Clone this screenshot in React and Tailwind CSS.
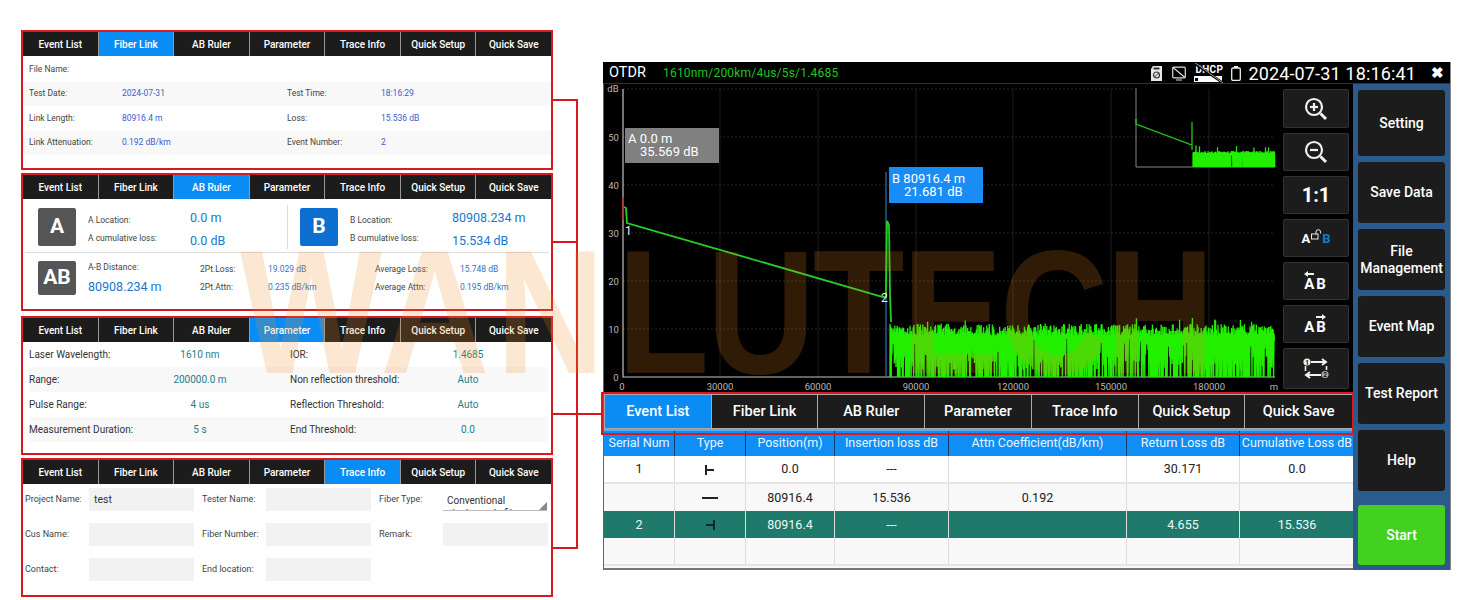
import React from 'react';

const tabNames = ['Event List', 'Fiber Link', 'AB Ruler', 'Parameter', 'Trace Info', 'Quick Setup', 'Quick Save'];

// seeded so the noise floor is the same on every render
let seed = 7;
const rnd = () => {
  seed = (seed * 16807) % 2147483647;
  return seed / 2147483647;
};

const makeNoise = (x0, x1, top, bottom, spread, step, deep, reach) => {
  let d = `M${x0} ${bottom}`;
  for (let x = x0; x < x1; x += step) {
    const hi = top + rnd() * spread + (rnd() > 0.94 ? -6 : 0);
    const lo = rnd() < deep ? bottom : top + spread + rnd() * reach;
    d += `L${x.toFixed(1)} ${hi.toFixed(1)}L${(x + step / 2).toFixed(1)} ${lo.toFixed(1)}`;
  }
  return d;
};

const noiseMain = makeNoise(890, 1274, 324, 377, 12, 0.8, 0.6, 34);
const noiseInset = makeNoise(1193, 1275, 151, 167, 2.5, 0.5, 0.9, 8);

const Tabs = ({ active }) => (
  <div className="flex h-[24px] bg-[#1c1c1c] shrink-0">
    {tabNames.map((name, i) => (
      <div
        key={name}
        className={`flex-1 flex items-center justify-center text-[10px] font-medium text-white border-r border-[#999] last:border-r-0 ${active === i ? 'bg-[#0a8cf5]' : ''}`}
      >
        {name}
      </div>
    ))}
  </div>
);

const Panel = ({ className, active, children }) => (
  <div className={`flex flex-col border-2 border-[#d81920] overflow-hidden ${className}`}>
    <Tabs active={active} />
    {children}
  </div>
);

const LinkRow = ({ alt, children }) => (
  <div className={`flex items-center h-[24.5px] pl-[6px] text-[8.5px] text-[#444] ${alt ? 'bg-[#f8f8f8]' : ''}`}>
    {children}
  </div>
);

const FiberLinkPanel = () => (
  <Panel className="h-[140px]" active={1}>
    <div className="pt-[1px]">
      <LinkRow>File Name:</LinkRow>
      {[
        ['Test Date:', '2024-07-31', 'Test Time:', '18:16:29'],
        ['Link Length:', '80916.4 m', 'Loss:', '15.536 dB'],
        ['Link Attenuation:', '0.192 dB/km', 'Event Number:', '2'],
      ].map((r, i) => (
        <LinkRow key={r[0]} alt={i !== 1}>
          <span className="w-[93px]">{r[0]}</span>
          <span className="w-[165px] text-[#3a5ccc]">{r[1]}</span>
          <span className="w-[94px]">{r[2]}</span>
          <span className="text-[#3a5ccc]">{r[3]}</span>
        </LinkRow>
      ))}
    </div>
  </Panel>
);

const Badge = ({ children, blue, small }) => (
  <div
    className={`w-[38px] flex items-center justify-center rounded-[2px] font-bold text-white shrink-0 ${small ? 'h-[34px]' : 'h-[38px]'} ${blue ? 'bg-[#0d6fd0]' : 'bg-[#555]'} text-[21px]`}
  >
    {children}
  </div>
);

const RulerSide = ({ badge, blue, loc, loss, className }) => (
  <div className={`flex items-center ${className}`}>
    <Badge blue={blue}>{badge}</Badge>
    <div className="ml-[12px] w-[102px] pt-[6px] text-[8.5px] text-[#444] flex flex-col gap-[9px]">
      <span className="leading-[9px]">{badge} Location:</span>
      <span className="leading-[9px]">{badge} cumulative loss:</span>
    </div>
    <div className="w-[96px] pt-[4px] text-[12.5px] text-[#1678d0] flex flex-col gap-[8px]">
      <span className="leading-[15px]">{loc}</span>
      <span className="leading-[15px]">{loss}</span>
    </div>
  </div>
);

const AbRulerPanel = () => (
  <Panel className="h-[138px] mt-[3px]" active={2}>
    <div className="flex h-[54px] items-center border-b border-[#ddd] mx-[2px] pt-[2px]">
      <RulerSide badge="A" loc="0.0 m" loss="0.0 dB" className="pl-[13px] w-[263px] border-r border-[#ddd] h-[44px]" />
      <RulerSide badge="B" blue loc="80908.234 m" loss="15.534 dB" className="pl-[12px]" />
    </div>
    <div className="flex items-center pl-[15px] pt-[8px]">
      <Badge small>AB</Badge>
      <div className="ml-[12px] w-[112px] flex flex-col">
        <span className="text-[8.5px] leading-[10px] text-[#444]">A-B Distance:</span>
        <span className="text-[12.5px] leading-[16px] mt-[7px] text-[#1678d0]">80908.234 m</span>
      </div>
      <div className="grid grid-cols-[68px_107px_85px_80px] gap-y-[9px] text-[8.5px] leading-[9px] text-[#444]">
        <span>2Pt.Loss:</span>
        <span className="text-[#3a6ccc]">19.029 dB</span>
        <span>Average Loss:</span>
        <span className="text-[#3a6ccc]">15.748 dB</span>
        <span>2Pt.Attn:</span>
        <span className="text-[#3a6ccc]">0.235 dB/km</span>
        <span>Average Attn:</span>
        <span className="text-[#3a6ccc]">0.195 dB/km</span>
      </div>
    </div>
  </Panel>
);

const ParameterPanel = () => (
  <Panel className="h-[139px] mt-[5px]" active={3}>
    <div className="pl-[6px] pr-[3px]">
      {[
        ['Laser Wavelength:', '1610 nm', 'IOR:', '1.4685'],
        ['Range:', '200000.0 m', 'Non reflection threshold:', 'Auto'],
        ['Pulse Range:', '4 us', 'Reflection Threshold:', 'Auto'],
        ['Measurement Duration:', '5 s', 'End Threshold:', '0.0'],
      ].map((r, i) => (
        <div key={r[0]} className={`flex items-center h-[25px] text-[10px] text-[#333] ${i % 2 ? 'bg-[#f8f8f8]' : ''}`}>
          <span className="w-[122px]">{r[0]}</span>
          <span className="w-[98px] text-center text-[#1f7f8a]">{r[1]}</span>
          <span className="w-[41px]" />
          <span className="w-[128px]">{r[2]}</span>
          <span className="w-[100px] text-center text-[#1f7f8a]">{r[3]}</span>
        </div>
      ))}
    </div>
  </Panel>
);

const Field = ({ label, value }) => (
  <div className="flex items-center">
    <span className="text-[9px] text-[#444] w-[64px]">{label}</span>
    <div className="w-[105px] h-[23px] bg-[#f2f2f2] flex items-center px-[5px] text-[10.5px] text-[#333]">{value}</div>
  </div>
);

const TraceInfoPanel = () => (
  <Panel className="h-[139px] mt-[3px]" active={4}>
    <div className="flex flex-col gap-[12px] pl-[2px] pt-[4px]">
      <div className="flex gap-[8px]">
        <Field label="Project Name:" value="test" />
        <Field label="Tester Name:" />
        <div className="flex items-center">
          <span className="text-[9px] text-[#444] w-[64px]">Fiber Type:</span>
          <div className="relative w-[104px] h-[23px] border-b border-[#bbb] overflow-hidden px-[4px] pt-[6px] text-[10px] leading-[13px] text-[#333]">
            Conventional<br />single-mode fiber
            <div className="absolute right-0 bottom-0 w-0 h-0 border-l-[8px] border-l-transparent border-b-[8px] border-b-[#888]" />
          </div>
        </div>
      </div>
      <div className="flex gap-[8px]">
        <Field label="Cus Name:" />
        <Field label="Fiber Number:" />
        <Field label="Remark:" />
      </div>
      <div className="flex gap-[8px]">
        <Field label="Contact:" />
        <Field label="End location:" />
      </div>
    </div>
  </Panel>
);

const StatusIcons = () => (
  <div className="flex items-center">
    <svg width="11" height="15" viewBox="0 0 11 15" className="mr-[10px]">
      <path d="M2 0h9v15H0V3z" fill="#e8e8e8" />
      <rect x="2.5" y="1.5" width="6" height="2" fill="#333" />
      <circle cx="5.5" cy="9" r="3" fill="none" stroke="#333" strokeWidth="1.2" />
      <path d="M3.5 11l4-4" stroke="#333" strokeWidth="1" />
    </svg>
    <svg width="14" height="15" viewBox="0 0 14 15" className="mr-[8px]">
      <rect x="0.7" y="1.2" width="12.6" height="10.6" rx="1" fill="none" stroke="#ddd" strokeWidth="1.2" />
      <path d="M1 1.5l12 10M4 14h6" stroke="#ddd" strokeWidth="1.2" />
    </svg>
    <div className="relative w-[30px] h-[20px] mr-[7px]">
      <div className="text-[10px] leading-[11px] font-bold text-white tracking-[0.3px] pl-[1px] pt-[1px]">DHCP</div>
      <div className="h-[6px] mt-[1px] bg-white w-[28px] flex items-center pl-[1px]">
        <div className="w-[3px] h-[3px] bg-black" />
      </div>
      <svg width="30" height="20" viewBox="0 0 30 20" className="absolute left-0 top-0">
        <path d="M0 0l29 20" stroke="#000" strokeWidth="2.4" />
        <path d="M0 -1l29 21" stroke="#ccc" strokeWidth="0.8" />
      </svg>
    </div>
    <svg width="10" height="15" viewBox="0 0 10 15">
      <rect x="0.7" y="2" width="8.6" height="12.3" rx="1.2" fill="none" stroke="#eee" strokeWidth="1.3" />
      <rect x="3" y="0" width="4" height="2" fill="#eee" />
    </svg>
  </div>
);

const Chart = () => (
  <div className="relative w-[679px] h-[308px] shrink-0">
    <svg width="679" height="308" viewBox="604 84 679 308" className="block">
      {[137, 185, 233, 281, 329].map((y) => (
        <path key={y} d={`M623 ${y}H1275`} stroke="#333" strokeWidth="0.7" strokeDasharray="2 2" />
      ))}
      <path d="M623 89H1135" stroke="#333" strokeWidth="0.7" strokeDasharray="2 2" />
      {[720, 818, 916, 1013, 1111, 1209].map((x) => (
        <path key={x} d={`M${x} 89V377`} stroke="#232323" strokeWidth="0.8" />
      ))}
      <path d="M623 89V377H1275" fill="none" stroke="#c4c4c4" strokeWidth="1.2" />

      <path d="M1136 88V167H1275" fill="none" stroke="#888" strokeWidth="1" />
      <path d="M1136 119V124L1192 145V122V150" fill="none" stroke="#1fc71f" strokeWidth="1.3" />
      <path d={noiseInset} fill="none" stroke="#22ee00" strokeWidth="1.2" />

      <path d="M886 172V377" stroke="#2f8fe0" strokeWidth="1" />
      <path d="M886 265V287" stroke="#c21f1f" strokeWidth="1" />
      <path d="M623 197V220" stroke="#c21f1f" strokeWidth="1.4" />
      <path d={noiseMain} fill="none" stroke="#22ee00" strokeWidth="1.3" />
      <path
        d="M624 207L626 208L627 223L883 297L886 297L887 221L889 225L890 295L891 322"
        fill="none"
        stroke="#24cf24"
        strokeWidth="1.8"
      />
      <g fill="#b8b8b8" fontSize="9.5">
        <text x="613" y="92" textAnchor="middle">dB</text>
        {[['50', 137], ['40', 185], ['30', 233], ['20', 281], ['10', 329], ['0', 377]].map(([t, y]) => (
          <text key={t} x={t === '0' ? 616 : 613.5} y={y + 3.5} textAnchor="middle">{t}</text>
        ))}
        {[['0', 622], ['30000', 720], ['60000', 818], ['90000', 916], ['120000', 1013], ['150000', 1111], ['180000', 1209], ['m', 1274]].map(([t, x]) => (
          <text key={t} x={x} y="390" textAnchor="middle">{t}</text>
        ))}
      </g>
      <g fill="#f0f0f0" fontSize="12">
        <text x="625" y="235">1</text>
        <text x="881" y="302">2</text>
      </g>
    </svg>
    <div className="absolute left-[21px] top-[44px] w-[94px] h-[35px] bg-[#808080] text-white text-[13px] leading-[13px] pt-[4px] pl-[3px]">
      <div>A 0.0 m</div>
      <div className="pl-[12px]">35.569 dB</div>
    </div>
    <div className="absolute left-[285px] top-[83px] w-[94px] h-[36px] bg-[#1a8cf5] text-white text-[13px] leading-[13px] pt-[5px] pl-[3px]">
      <div>B 80916.4 m</div>
      <div className="pl-[12px]">21.681 dB</div>
    </div>
  </div>
);

const ToolButton = ({ children, className }) => (
  <div className={`flex items-center justify-center bg-[#1c1c1c] border border-[#333] rounded-[2px] text-white w-[66px] ${className}`}>
    {children}
  </div>
);

const Magnifier = ({ minus }) => (
  <svg width="24" height="24" viewBox="0 0 24 24" fill="none" stroke="#f0f0f0" strokeWidth="2.2">
    <circle cx="10" cy="10" r="8" />
    <path d="M6 10h8" />
    {!minus && <path d="M10 6v8" />}
    <path d="M16.5 16.5L22 22" strokeWidth="3" />
  </svg>
);

const Arrow = ({ left }) => (
  <svg width="10" height="6" viewBox="0 0 10 6" fill="#f0f0f0" className="block">
    {left ? <path d="M0 3l4-3v2h6v2H4v2z" /> : <path d="M10 3L6 0v2H0v2h6v2z" />}
  </svg>
);

const Tools = () => (
  <div className="flex flex-col gap-[5px] pt-[5px] pr-[5px]">
    <ToolButton className="h-[39px]"><Magnifier /></ToolButton>
    <ToolButton className="h-[38px]"><Magnifier minus /></ToolButton>
    <ToolButton className="h-[38px] text-[20px] font-bold">1:1</ToolButton>
    <ToolButton className="h-[38px]">
      <span className="text-[13px] font-bold mt-[1px]">A</span>
      <svg width="11" height="11" viewBox="0 0 11 11" className="-mt-[7px] mx-[0.5px]" fill="none" stroke="#e8e8e8" strokeWidth="1">
        <rect x="0.5" y="5" width="6.5" height="5" />
        <path d="M5 5V3a2.3 2.3 0 0 1 4.6 0v1.5" />
      </svg>
      <span className="text-[13px] font-bold text-[#1678d0] mt-[1px]">B</span>
    </ToolButton>
    <ToolButton className="h-[38px]">
      <div className="flex flex-col items-start">
        <Arrow left />
        <span className="text-[15px] font-bold leading-[14px] tracking-[2px]">AB</span>
      </div>
    </ToolButton>
    <ToolButton className="h-[38px]">
      <div className="flex flex-col items-end">
        <span className="pr-[2px]"><Arrow /></span>
        <span className="text-[15px] font-bold leading-[14px] tracking-[2px]">AB</span>
      </div>
    </ToolButton>
    <ToolButton className="h-[41px]">
      <svg width="26" height="21" viewBox="0 0 26 21" fill="none" stroke="#f0f0f0" strokeWidth="2">
        <path d="M8 4h14M19 1l4 3-4 3" />
        <path d="M18 17H4M7 14l-4 3 4 3" />
        <path d="M2.5 8v5M23.5 8v4" strokeWidth="1.6" />
        <circle cx="4" cy="4" r="3.6" fill="#f0f0f0" stroke="none" />
        <circle cx="22" cy="16.5" r="3.6" fill="#aaa" stroke="none" />
        <text x="4" y="6.5" fontSize="6.5" fontWeight="700" fill="#111" stroke="none" textAnchor="middle">1</text>
        <text x="22" y="19" fontSize="6.5" fontWeight="700" fill="#111" stroke="none" textAnchor="middle">2</text>
      </svg>
    </ToolButton>
  </div>
);

const EventTable = () => {
  const cols = 'grid grid-cols-[71px_71px_89px_114px_178px_113px_114px]';
  const header = ['Serial Num', 'Type', 'Position(m)', 'Insertion loss dB', 'Attn Coefficient(dB/km)', 'Return Loss dB', 'Cumulative Loss dB'];
  const rows = [
    { h: 'h-[28px]', bg: 'bg-white text-[#222] border-b-2 border-[#e4e4e4]', cells: ['1', 'start', '0.0', '---', '', '30.171', '0.0'] },
    { h: 'h-[27px]', bg: 'bg-[#f8f8f8] text-[#222]', cells: ['', 'mid', '80916.4', '15.536', '0.192', '', ''] },
    { h: 'h-[27px]', bg: 'bg-[#1f7a6c] text-[#eef7f4]', cells: ['2', 'end', '80916.4', '---', '', '4.655', '15.536'] },
    { h: 'h-[28px]', bg: 'bg-[#f8f8f8] border-b-2 border-[#e4e4e4]', cells: ['', '', '', '', '', '', ''] },
  ];
  const typeIcon = {
    start: <path d="M5 1v10M5 6h8" />,
    mid: <path d="M1 6h16" />,
    end: <path d="M13 1v10M5 6h8" />,
  };
  return (
    <div className="bg-[#f8f8f8] h-[139px] overflow-hidden border-b-2 border-[#777]">
      <div className={`${cols} h-[25px] bg-[#0f8ef5]`}>
        {header.map((h) => (
          <div key={h} className="flex items-center justify-center text-[12.5px] text-[#eaf5ff] whitespace-nowrap border-r border-[#123a66] last:border-r-0">
            {h}
          </div>
        ))}
      </div>
      {rows.map((row, r) => (
        <div key={r} className={`${cols} ${row.h} ${row.bg} text-[12.5px]`}>
          {row.cells.map((c, i) => (
            <div key={i} className="flex items-center justify-center pt-[1px] border-r border-[#dcdcdc] last:border-r-0">
              {typeIcon[c] ? (
                <svg width="18" height="12" viewBox="0 0 18 12" fill="none" stroke={c === 'end' ? '#123' : '#222'} strokeWidth="2">
                  {typeIcon[c]}
                </svg>
              ) : c}
            </div>
          ))}
        </div>
      ))}
    </div>
  );
};

const SideButton = ({ children, className }) => (
  <div className={`flex items-center justify-center text-center leading-[17px] text-[14px] font-medium text-white rounded-[3px] ${className}`}>
    {children}
  </div>
);

const Device = () => (
  <div className="w-[848px] h-[508px] flex flex-col bg-black border-r border-[#888] shrink-0">
    <div className="h-[22px] flex items-center border-b border-[#333] pl-[6px] pr-[6px] pt-[1px] shrink-0">
      <span className="text-[14.5px] text-white w-[54px]">OTDR</span>
      <span className="text-[12px] text-[#1fc71f] tracking-[0.2px]">1610nm/200km/4us/5s/1.4685</span>
      <div className="ml-auto flex items-center">
        <StatusIcons />
        <span className="text-[18px] text-white ml-[7px] tracking-[0.15px]">2024-07-31 18:16:41</span>
        <span className="ml-[15px] text-[15px] font-bold text-white">✖</span>
      </div>
    </div>
    <div className="flex flex-1 min-h-0">
      <div className="w-[750px] flex flex-col border-l border-[#666]">
        <div className="flex h-[308px] shrink-0">
          <Chart />
          <Tools />
        </div>
        <div className="h-[39px] pt-[2px] pb-[2px] bg-[#5aaef0]">
          <div className="grid grid-cols-7 h-[35px] bg-[#1c1c1c] border border-[#aaa]">
            {tabNames.map((name, i) => (
              <div key={name} className={`flex items-center justify-center text-[14.5px] font-medium text-white border-r border-[#aaa] last:border-r-0 ${i === 0 ? 'bg-[#0a8cf5]' : ''}`}>
                {name}
              </div>
            ))}
          </div>
        </div>
        <EventTable />
      </div>
      <div className="w-[97px] bg-[#2a5b8c] flex flex-col gap-[6px] pt-[6px] px-[5px]">
        <SideButton className="h-[66px] bg-[#1c1c1c]">Setting</SideButton>
        <SideButton className="h-[61px] bg-[#1c1c1c]">Save Data</SideButton>
        <SideButton className="h-[61px] bg-[#1c1c1c]">File<br />Management</SideButton>
        <SideButton className="h-[61px] bg-[#1c1c1c]">Event Map</SideButton>
        <SideButton className="h-[61px] bg-[#1c1c1c]">Test Report</SideButton>
        <SideButton className="h-[61px] bg-[#1c1c1c]">Help</SideButton>
        <SideButton className="h-[60px] mt-[8px] bg-[#43d11f]">Start</SideButton>
      </div>
    </div>
  </div>
);

export default function App() {
  return (
    <div className="relative w-[1464px] h-[600px] overflow-hidden bg-white flex font-['Roboto',sans-serif]">
      <div className="w-[532px] ml-[21px] mt-[30px] flex flex-col shrink-0">
        <FiberLinkPanel />
        <AbRulerPanel />
        <ParameterPanel />
        <TraceInfoPanel />
      </div>
      <div className="ml-[50px] mt-[62px]">
        <Device />
      </div>

      {/* callout lines and the box round the device tabs */}
      <div className="absolute left-[553px] top-[99px] w-[25px] h-[2px] bg-[#d81920]" />
      <div className="absolute left-[553px] top-[241px] w-[25px] h-[2px] bg-[#d81920]" />
      <div className="absolute left-[553px] top-[413px] w-[50px] h-[2px] bg-[#d81920]" />
      <div className="absolute left-[553px] top-[547px] w-[25px] h-[2px] bg-[#d81920]" />
      <div className="absolute left-[576px] top-[99px] w-[2px] h-[450px] bg-[#d81920]" />
      <div className="absolute left-[601px] top-[392px] w-[753px] h-[43px] border-2 border-[#d81920]" />

      {/* watermark */}
      <div className="absolute left-[240px] top-[210px] origin-left scale-x-[0.85] text-[177px] leading-[204px] font-bold whitespace-nowrap text-[#f08a1e]/20 font-['Liberation_Sans',sans-serif] pointer-events-none">
        <span className="tracking-[8px]">WAN</span>
        <span className="ml-[7px] tracking-[-3px]">LUTECH</span>
      </div>
    </div>
  );
}
